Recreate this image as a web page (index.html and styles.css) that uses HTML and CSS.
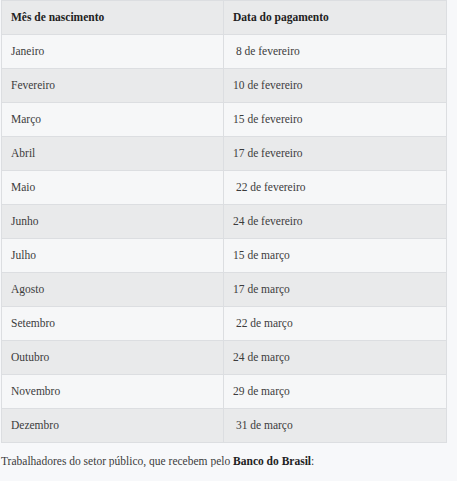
FILE: index.html
```html
<!DOCTYPE html>
<html lang="pt">
<head>
<meta charset="utf-8">
<link rel="stylesheet" href="styles.css">
</head>
<body>
<table class="pay">
  <colgroup><col class="c1"><col class="c2"></colgroup>
  <thead>
    <tr><th>Mês de nascimento</th><th>Data do pagamento</th></tr>
  </thead>
  <tbody>
    <tr><td>Janeiro</td><td>&nbsp;8 de fevereiro</td></tr>
    <tr><td>Fevereiro</td><td>10 de fevereiro</td></tr>
    <tr><td>Março</td><td>15 de fevereiro</td></tr>
    <tr><td>Abril</td><td>17 de fevereiro</td></tr>
    <tr><td>Maio</td><td>&nbsp;22 de fevereiro</td></tr>
    <tr><td>Junho</td><td>24 de fevereiro</td></tr>
    <tr><td>Julho</td><td>15 de março</td></tr>
    <tr><td>Agosto</td><td>17 de março</td></tr>
    <tr><td>Setembro</td><td>&nbsp;22 de março</td></tr>
    <tr><td>Outubro</td><td>24 de março</td></tr>
    <tr><td>Novembro</td><td>29 de março</td></tr>
    <tr><td>Dezembro</td><td>&nbsp;31 de março</td></tr>
  </tbody>
</table>
<p class="note">Trabalhadores do setor público, que recebem pelo <strong>Banco do Brasil</strong>:</p>
</body>
</html>
```
FILE: styles.css
```css
html, body {
  margin: 0;
  padding: 0;
  background: #f7f8fa;
}
body {
  font-family: "Liberation Serif", "Times New Roman", serif;
  font-size: 11.5px;
  color: #3c3c3c;
  padding: 0 0 0 1px;
}
.pay {
  border-collapse: collapse;
  width: 446px;
  table-layout: fixed;
  border: 1px solid #dcdee1;
}
.pay .c1 { width: 222px; }
.pay th, .pay td {
  border: 1px solid #dcdee1;
  height: 32px;
  padding: 0 9px 1px 9px;
  text-align: left;
  vertical-align: middle;
}
.pay th {
  background: #e9eaeb;
  color: #222;
  font-weight: bold;
}
.pay tbody tr:nth-child(odd) td { background: #f6f7f8; }
.pay tbody tr:nth-child(even) td { background: #e9eaeb; }
.note {
  margin: 12px 0 0 0;
}
.note strong { color: #222; }
```
